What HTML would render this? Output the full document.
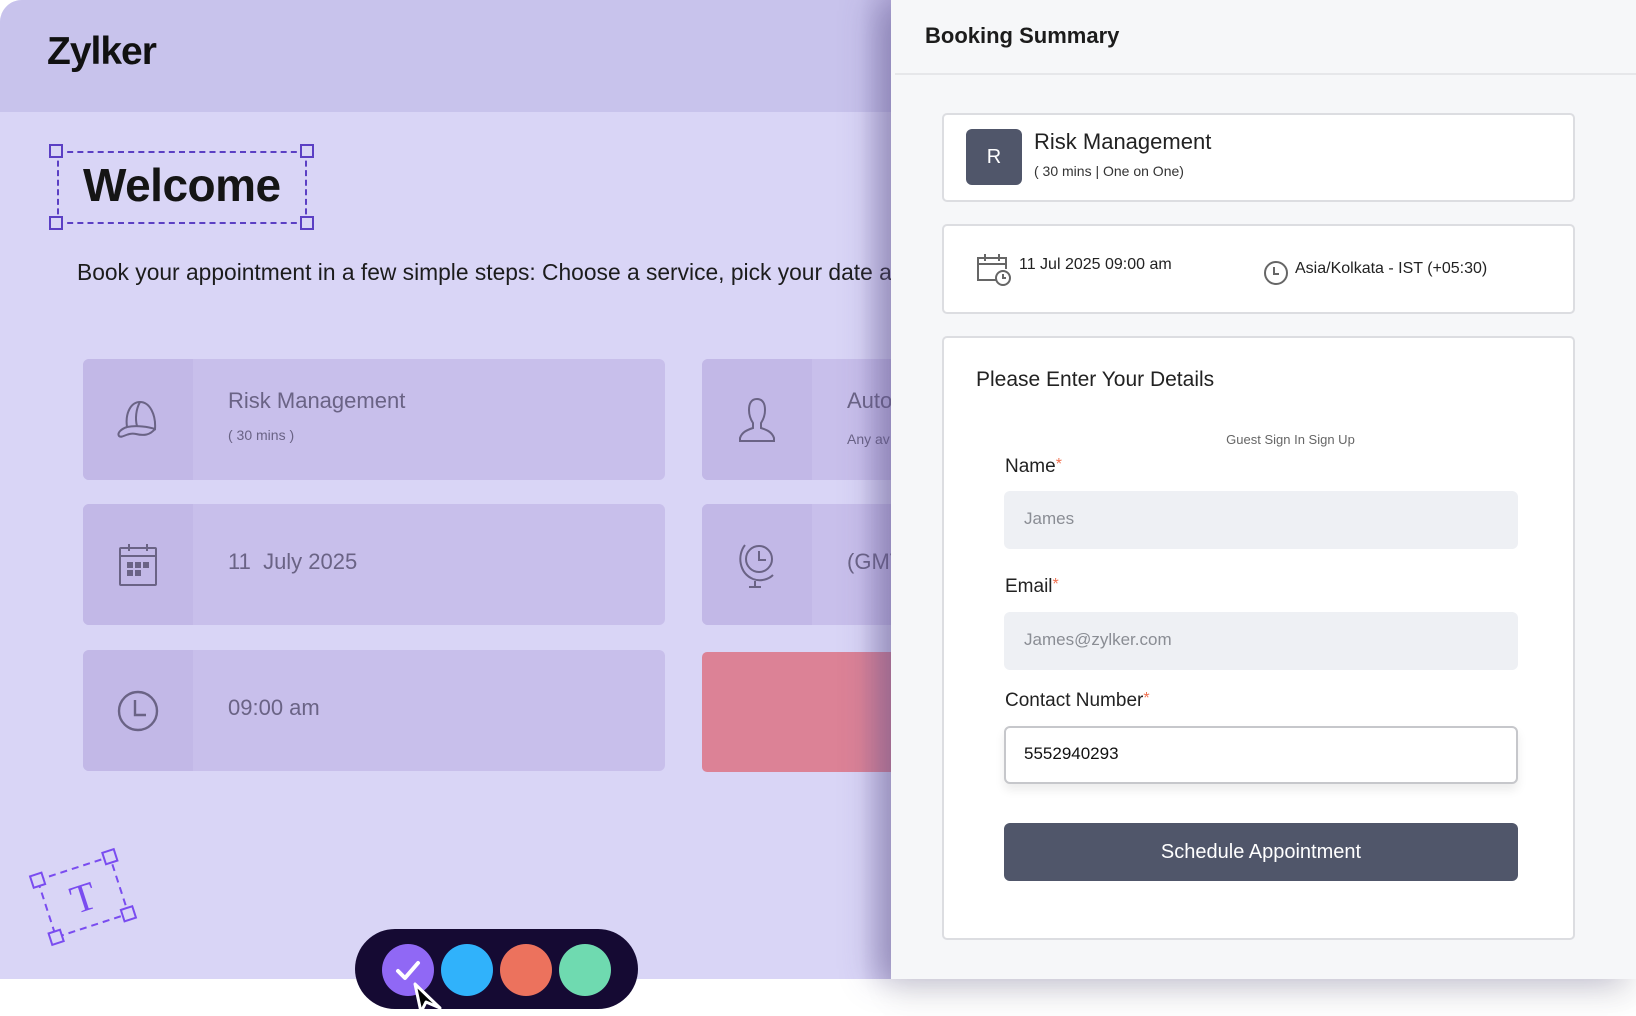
<!DOCTYPE html>
<html><head><meta charset="utf-8">
<style>
*{box-sizing:border-box;margin:0;padding:0}
body{width:1636px;height:1013px;overflow:hidden;background:#fff;font-family:"Liberation Sans",sans-serif;position:relative}
.left{position:absolute;left:0;top:0;width:900px;height:979px;background:#d9d5f6;border-top-left-radius:22px;overflow:hidden}
.hdr{position:absolute;left:0;top:0;width:100%;height:112px;background:#c8c3ec}
.logo{position:absolute;left:47px;top:30px;font-size:39px;font-weight:bold;color:#111;letter-spacing:-1px}
.wbox{position:absolute;left:57px;top:151px;width:250px;height:73px;border:2px dashed #5b3fc4}
.h{position:absolute;width:14px;height:14px;border:2px solid #5b3fc4;background:#d9d5f6}
.welcome{position:absolute;left:83px;top:158px;font-size:46px;font-weight:bold;color:#151515;letter-spacing:-.5px}
.para{position:absolute;left:77px;top:259px;font-size:22.8px;color:#1c1c1c;white-space:nowrap}
.card{position:absolute;height:121px;background:#c8bfeb;border-radius:6px;overflow:hidden}
.card .ic{position:absolute;left:0;top:0;width:110px;height:100%;background:#c2b8e7;display:flex;align-items:center;justify-content:center}
.card .t{position:absolute;left:145px;font-size:22px;color:#6a6385;white-space:nowrap}
.card .s{position:absolute;left:145px;font-size:14px;color:#6a6385;white-space:nowrap}
.right{position:absolute;left:891px;top:0;width:745px;height:979px;background:#f6f7f9;box-shadow:-18px 0 30px rgba(90,80,140,.35),0 18px 30px rgba(0,0,0,.08)}
.bs{position:absolute;left:34px;top:23px;font-size:22px;font-weight:bold;color:#1c1c1c}
.div{position:absolute;left:4px;top:73px;width:741px;height:2px;background:#e6e7ea}
.box{position:absolute;left:51px;width:633px;background:#fff;border:2px solid #dcdde1;border-radius:5px}
.lab{position:absolute;left:61px;font-size:19px;color:#222}
.lab span{color:#f0704f;font-size:16px;vertical-align:top}
.inp{position:absolute;left:60px;width:514px;height:58px;border-radius:6px;background:#eef0f4;font-size:17px;color:#8a8d94;padding:18px 0 0 20px}
.pill{position:absolute;left:355px;top:929px;width:283px;height:80px;background:#150a33;border-radius:40px}
.dot{position:absolute;top:15px;width:52px;height:52px;border-radius:50%}
</style></head><body>
<div class="left">
 <div class="hdr"></div>
 <div class="logo">Zylker</div>
 <div class="wbox"></div>
 <div class="h" style="left:49px;top:144px"></div>
 <div class="h" style="left:300px;top:144px"></div>
 <div class="h" style="left:49px;top:216px"></div>
 <div class="h" style="left:300px;top:216px"></div>
 <div class="welcome">Welcome</div>
 <div class="para">Book your appointment in a few simple steps: Choose a service, pick your date and time, and fill in your details.</div>

 <div class="card" style="left:83px;top:359px;width:582px">
  <div class="ic"><svg width="46" height="46" viewBox="0 0 46 46" fill="none" stroke="#6a6385" stroke-width="2"><path d="M12 30 C10 16 16 5 25 5 C35 5 41 18 40 32 C34 30 22 28 12 30Z"/><path d="M25 5 C21 12 20 22 22 29"/><path d="M12 30 C6 32 2 36 4 39 C7 42 12 35 21 37 C29 39 35 38 40 32"/></svg></div>
  <div class="t" style="top:29px">Risk Management</div>
  <div class="s" style="top:68px">( 30 mins )</div>
 </div>
 <div class="card" style="left:702px;top:359px;width:300px">
  <div class="ic"><svg width="44" height="50" viewBox="0 0 44 50" fill="none" stroke="#6a6385" stroke-width="2"><path d="M22 4 C16 4 14 9 14 15 C14 21 16 25 18 28 L18 33 C12 35 7 37 5 43 L5 46 L39 46 L39 43 C37 37 32 35 26 33 L26 28 C28 25 30 21 30 15 C30 9 28 4 22 4Z"/></svg></div>
  <div class="t" style="top:29px">Auto</div>
  <div class="s" style="top:72px">Any av</div>
 </div>
 <div class="card" style="left:83px;top:504px;width:582px">
  <div class="ic"><svg width="42" height="46" viewBox="0 0 42 46" fill="none" stroke="#6a6385" stroke-width="2"><rect x="3" y="6" width="36" height="37" rx="1"/><path d="M3 14H39M12 2v7M30 2v7"/><g fill="#6a6385" stroke="none"><rect x="10" y="20" width="6" height="6"/><rect x="18" y="20" width="6" height="6"/><rect x="26" y="20" width="6" height="6"/><rect x="10" y="28" width="6" height="6"/><rect x="18" y="28" width="6" height="6"/></g></svg></div>
  <div class="t" style="top:45px">11&nbsp; July 2025</div>
 </div>
 <div class="card" style="left:702px;top:504px;width:300px">
  <div class="ic"><svg width="44" height="52" viewBox="0 0 44 52" fill="none" stroke="#6a6385" stroke-width="2"><circle cx="24" cy="20" r="13"/><path d="M24 12v9h7"/><path d="M10 6 C2 16 4 34 18 40 C26 43 34 40 38 36"/><path d="M20 42v6M14 48h12"/></svg></div>
  <div class="t" style="top:45px">(GMT</div>
 </div>
 <div class="card" style="left:83px;top:650px;width:582px">
  <div class="ic"><svg width="44" height="44" viewBox="0 0 44 44" fill="none" stroke="#6a6385" stroke-width="2.4"><circle cx="22" cy="22" r="19"/><path d="M19 11v15h11"/></svg></div>
  <div class="t" style="top:45px">09:00 am</div>
 </div>
 <div style="position:absolute;left:702px;top:652px;width:300px;height:120px;background:#dc8296;border-radius:5px"></div>
 <div style="position:absolute;right:0;top:0;width:40px;height:100%;background:linear-gradient(90deg,rgba(120,100,160,0),rgba(120,100,160,.25))"></div>
</div>
<div style="position:absolute;left:0;top:979px;width:900px;height:34px;background:#fff"></div>

<svg style="position:absolute;left:28px;top:845px" width="110" height="105" viewBox="0 0 110 105">
 <g transform="rotate(-18 55 52)" fill="none" stroke="#7a4cf0" stroke-width="2">
  <rect x="17" y="22" width="76" height="60" stroke-dasharray="7 5"/>
  <rect x="11" y="16" width="12" height="12" fill="#d9d5f6"/>
  <rect x="87" y="16" width="12" height="12" fill="#d9d5f6"/>
  <rect x="11" y="76" width="12" height="12" fill="#d9d5f6"/>
  <rect x="87" y="76" width="12" height="12" fill="#d9d5f6"/>
  <text x="55" y="66" text-anchor="middle" font-family="Liberation Serif,serif" font-size="40" fill="#7a4cf0" stroke="none">T</text>
 </g>
</svg>

<div class="pill">
 <div class="dot" style="left:27px;background:#9068f5"><svg width="52" height="52" viewBox="0 0 52 52"><path d="M16 27l7 7 13-15" fill="none" stroke="#fff" stroke-width="4" stroke-linecap="round" stroke-linejoin="round"/></svg></div>
 <div class="dot" style="left:86px;background:#30b2fb"></div>
 <div class="dot" style="left:145px;background:#ec725d"></div>
 <div class="dot" style="left:204px;background:#6fdab0"></div>
 <svg style="position:absolute;left:57px;top:53px" width="34" height="34" viewBox="0 0 34 34"><path d="M3 2 L9 30 L14 20 L28 26 Z" fill="#000" stroke="#fff" stroke-width="3" stroke-linejoin="round"/></svg>
</div>

<div class="right">
 <div class="bs">Booking Summary</div>
 <div class="div"></div>
 <div class="box" style="top:113px;height:89px">
  <div style="position:absolute;left:22px;top:14px;width:56px;height:56px;border-radius:6px;background:#50566a;color:#fff;font-size:20px;display:flex;align-items:center;justify-content:center">R</div>
  <div style="position:absolute;left:90px;top:14px;font-size:22px;color:#222">Risk Management</div>
  <div style="position:absolute;left:90px;top:48px;font-size:14px;color:#333">( 30 mins | One on One)</div>
 </div>
 <div class="box" style="top:224px;height:90px">
  <svg style="position:absolute;left:32px;top:26px" width="36" height="34" viewBox="0 0 36 34" fill="none" stroke="#666" stroke-width="2"><path d="M20 28H2V6h28v11"/><path d="M2 12h28M9 2v7M23 2v7"/><circle cx="27" cy="26" r="7" fill="#fff"/><path d="M27 22v4h3"/></svg>
  <div style="position:absolute;left:75px;top:30px;font-size:16px;color:#222">11 Jul 2025 09:00 am</div>
  <svg style="position:absolute;left:319px;top:34px" width="26" height="26" viewBox="0 0 26 26" fill="none" stroke="#666" stroke-width="2"><circle cx="13" cy="13" r="11"/><path d="M11 7v7h5"/></svg>
  <div style="position:absolute;left:351px;top:34px;font-size:16px;color:#222">Asia/Kolkata - IST (+05:30)</div>
 </div>
 <div class="box" style="top:336px;height:604px">
  <div style="position:absolute;left:32px;top:30px;font-size:21px;color:#222">Please Enter Your Details</div>
  <div style="position:absolute;left:0;width:100%;padding-left:64px;text-align:center;top:94px;font-size:13px;color:#666">Guest Sign In Sign Up</div>
  <div class="lab" style="top:118px">Name<span>*</span></div>
  <div class="inp" style="top:153px">James</div>
  <div class="lab" style="top:238px">Email<span>*</span></div>
  <div class="inp" style="top:274px">James@zylker.com</div>
  <div class="lab" style="top:352px">Contact Number<span>*</span></div>
  <div class="inp" style="top:388px;background:#fff;border:2px solid #c6c7cb;box-shadow:0 6px 10px rgba(0,0,0,.08);color:#111;padding-top:16px;padding-left:18px">5552940293</div>
  <div style="position:absolute;left:60px;top:485px;width:514px;height:58px;border-radius:6px;background:#50566a;color:#fff;font-size:20px;text-align:center;line-height:58px">Schedule Appointment</div>
 </div>
</div>
</body></html>
